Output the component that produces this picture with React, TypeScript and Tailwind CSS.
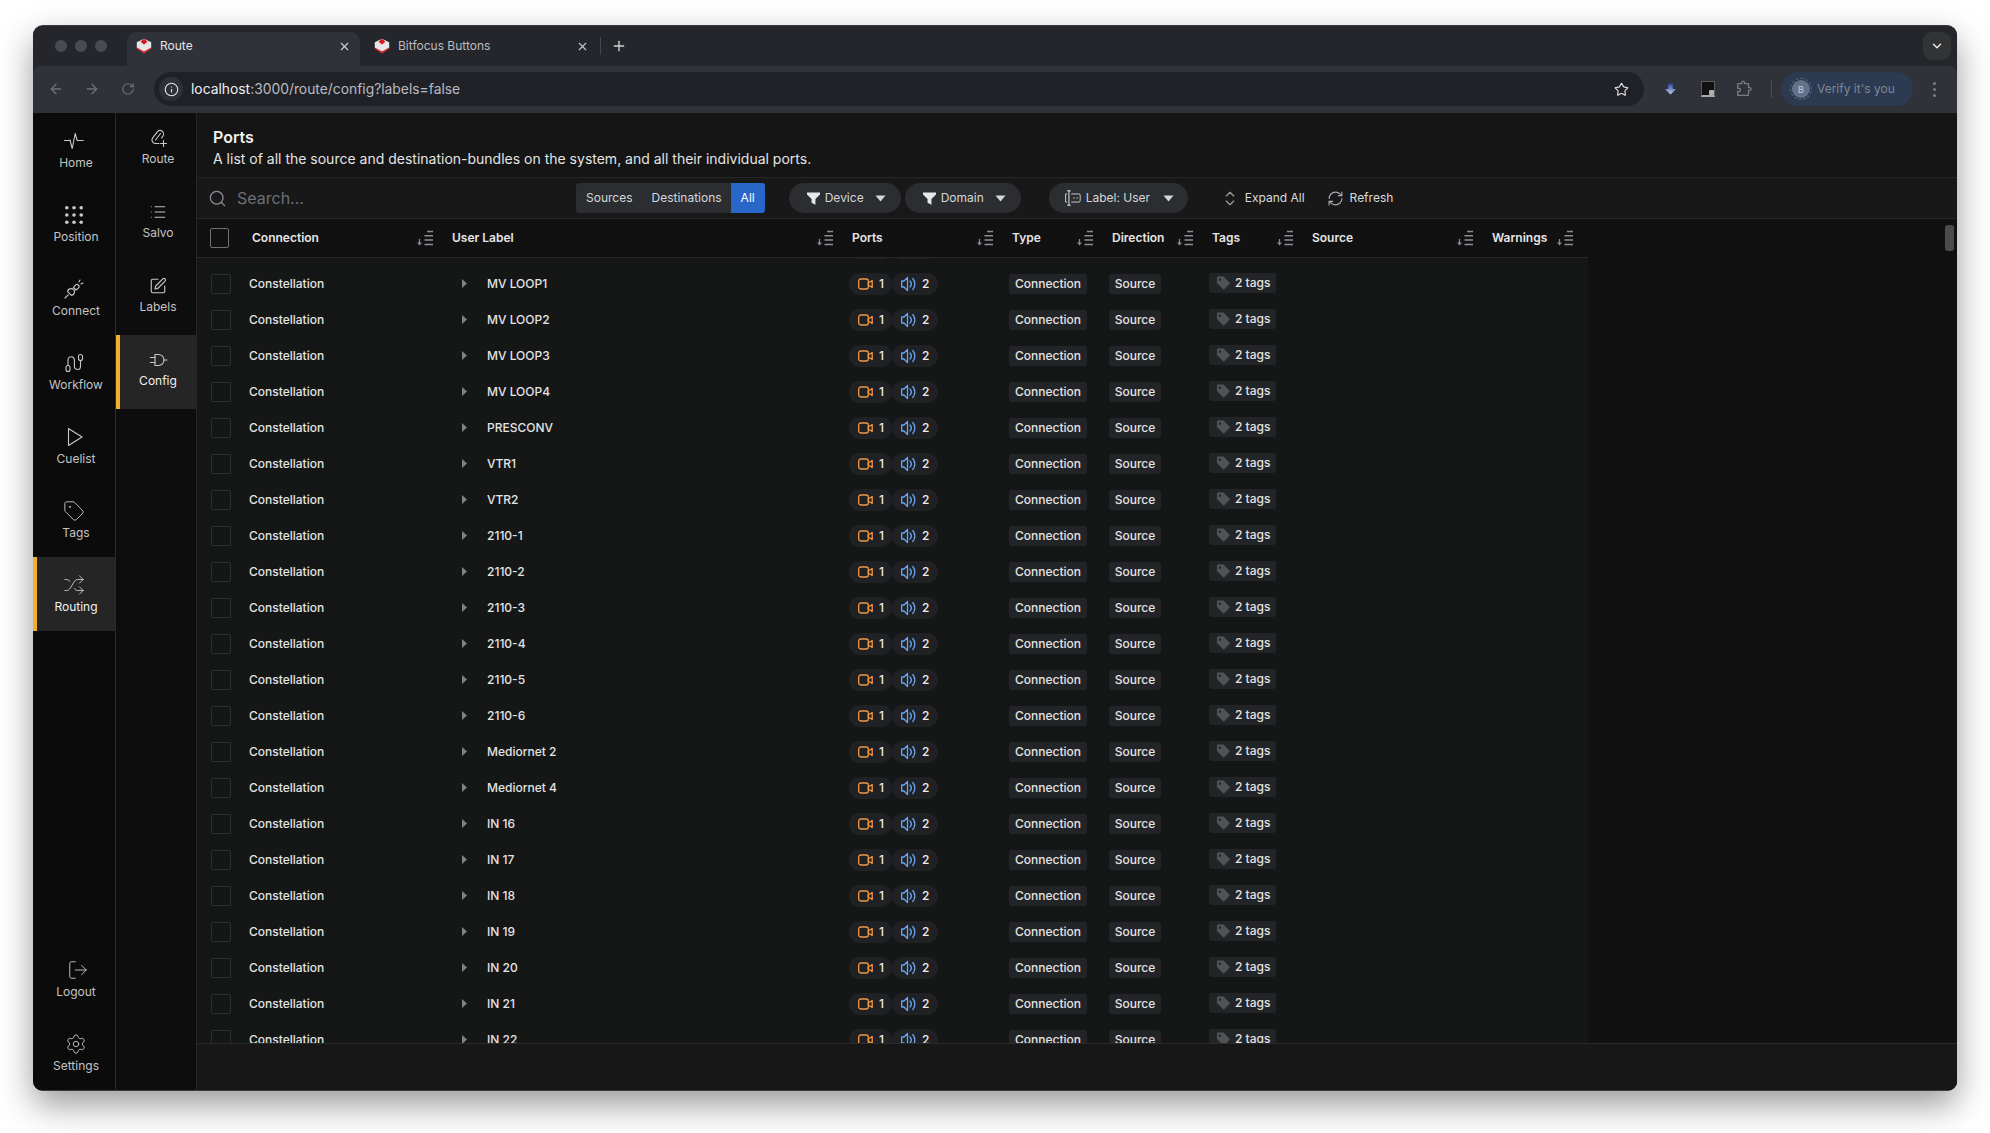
import React from "react";
import {
  ArrowLeft,
  ArrowRight,
  ChevronDown,
  Info,
  List,
  LogOut,
  Plus,
  RefreshCw,
  RotateCw,
  Search,
  Settings,
  Shuffle,
  SquarePen,
  Star,
  Tag,
  X,
} from "lucide-react";

type IconProps = { className?: string };

const Svg = ({ className, children }: IconProps & { children: React.ReactNode }) => (
  <svg
    viewBox="0 0 20 20"
    fill="none"
    stroke="currentColor"
    strokeWidth="1.1"
    strokeLinecap="round"
    strokeLinejoin="round"
    className={className}
  >
    {children}
  </svg>
);

const PulseIcon = ({ className }: IconProps) => (
  <Svg className={className}>
    <path d="M.5 9.500h4.500l1-.5 2.200 8.500 3-15 2 7h6" />
  </Svg>
);

const DotsIcon = ({ className }: IconProps) => (
  <svg viewBox="0 0 20 20" fill="currentColor" className={className}>
    {[2, 10, 18].map((y) =>
      [2, 10, 18].map((x) => <circle key={`${x}-${y}`} cx={x} cy={y} r="2" />)
    )}
  </svg>
);

const PlugIcon = ({ className }: IconProps) => (
  <Svg className={className}>
    <path d="M1 19l3.200-3.200" />
    <path d="M3.600 12.600l3.800 3.800c1.600-.3 3-1.700 3-3.400l.2-1.200-2.400-2.400-1.200.2c-1.700 0-3.100 1.400-3.400 3z" />
    <path d="M9.500 8.500l1.800-2.200c.6-.7 1.400-1.100 2.200-1l1.700 1.700c.1.800-.3 1.600-1 2.200l-2.200 1.800z" />
    <path d="M15 3l1-2M17 5l2-1" />
  </Svg>
);

const WorkflowIcon = ({ className }: IconProps) => (
  <Svg className={className}>
    <rect x="2" y="12.500" width="4" height="6" rx="2" />
    <rect x="14.500" y="1.500" width="4" height="6" rx="2" />
    <path d="M4 12.500V7a3.200 3.200 0 0 1 6.400 0v6.500a3 3 0 0 0 6.100 0V7.500" />
  </Svg>
);

const PlayIcon = ({ className }: IconProps) => (
  <Svg className={className}>
    <path d="M3.500 1.500L17 10 3.500 18.500z" />
  </Svg>
);

const RouteIcon = ({ className }: IconProps) => (
  <Svg className={className}>
    <path d="M11 15.500H7.500a3.500 3.500 0 0 1-2.800-5.600l4.600-6a3.500 3.500 0 0 1 5.600 4.200l-1.400 1.900" />
    <path d="M7.500 12l5-6.500" />
    <path d="M15.500 12.500v6M12.500 15.500h6" />
  </Svg>
);

const GateIcon = ({ className }: IconProps) => (
  <Svg className={className}>
    <path d="M7 4.500h3.500a5.500 5.500 0 0 1 0 11H7z" />
    <path d="M2.500 7.500H7M2.500 12.500H7M16 10h3" />
  </Svg>
);

const FunnelIcon = ({ className }: IconProps) => (
  <svg viewBox="0 0 12 12" fill="currentColor" className={className}>
    <path d="M0 .5h12v1.700L7.800 6.500V11.800L4.200 10V6.500L0 2.200z" />
  </svg>
);

const Caret = ({ className }: IconProps) => (
  <svg viewBox="0 0 11 7" fill="currentColor" className={className}>
    <path d="M.5 .5h10L5.500 6.500z" />
  </svg>
);

const LabelIcon = ({ className }: IconProps) => (
  <Svg className={className}>
    <path d="M3 5.500H1.800v9H3" />
    <path d="M4 2h3M4 18h3M5.500 2v16" stroke="#e5e7eb" />
    <path d="M8.500 5.500h8a1.500 1.500 0 0 1 1.500 1.500v6a1.500 1.500 0 0 1-1.500 1.500h-8" />
    <path d="M11 10h.01M14.500 10h.01" strokeWidth="1.700" />
  </Svg>
);

const ExpandIcon = ({ className }: IconProps) => (
  <svg
    viewBox="0 0 12 18"
    fill="none"
    stroke="currentColor"
    strokeWidth="1.400"
    strokeLinecap="round"
    strokeLinejoin="round"
    className={className}
  >
    <path d="M1.500 6L6 1.500 10.500 6M1.500 12L6 16.500 10.500 12" />
  </svg>
);

const SortIcon = () => (
  <svg viewBox="0 0 16 16" fill="none" className="w-4 h-4 text-[#8a8e98] shrink-0">
    <path d="M2.500 9v4" stroke="currentColor" strokeWidth="1.200" />
    <path d="M0 12.500h5L2.500 15.500z" fill="currentColor" />
    <path
      d="M10 1.500h6M7.500 5.800H16M7.500 10H16M7.500 14.500H16"
      stroke="currentColor"
      strokeWidth="1.500"
    />
  </svg>
);

const VideoIcon = ({ className }: IconProps) => (
  <svg
    viewBox="0 0 15 12"
    fill="none"
    stroke="currentColor"
    strokeWidth="1.300"
    strokeLinejoin="round"
    className={className}
  >
    <rect x=".7" y="1" width="9.600" height="10" rx="2" />
    <path d="M10.300 5l3.900-2.500v7L10.300 7z" />
  </svg>
);

const AudioIcon = ({ className }: IconProps) => (
  <svg
    viewBox="0 0 15 16"
    fill="none"
    stroke="currentColor"
    strokeWidth="1.300"
    strokeLinecap="round"
    strokeLinejoin="round"
    className={className}
  >
    <path d="M6.500 1.500v13L3 11H.7V5H3z" />
    <path d="M9 5a4.500 4.500 0 0 1 0 6M11.800 2.500a8.500 8.500 0 0 1 0 11" />
  </svg>
);

const SolidTag = ({ className }: IconProps) => (
  <svg viewBox="0 0 14 14" fill="currentColor" className={className}>
    <path d="M1 1.500C1 1 1.400 .6 2 .6h5c.4 0 .7.100 1 .4l5.400 5.500c.5.500.5 1.100 0 1.600l-4.900 4.900c-.5.500-1.100.5-1.600 0L1.400 7.500C1.100 7.200 1 6.900 1 6.500zM4 5a1.200 1.200 0 1 0 0-2.400A1.200 1.200 0 0 0 4 5z" />
  </svg>
);

const Favicon = () => (
  <svg viewBox="0 0 16 16" className="w-4 h-4 shrink-0">
    <path d="M8 .8l7.200 3.500v6.300L8 15.200.8 10.600V4.300z" fill="#e6e6e6" />
    <path d="M8 .8l3.400 2.900L8 6.400 4.600 3.700z" fill="#d8141c" />
    <path d="M.8 9.600L8 13.600l7.200-4v1.200L8 15.200.8 10.800z" fill="#d8141c" />
  </svg>
);

const PuzzleIcon = ({ className }: IconProps) => (
  <Svg className={className}>
    <path
      d="M3 4h4.500V2.800a1.500 1.500 0 0 1 3 0V4H15v4.500h1.400a1.500 1.500 0 0 1 0 3H15V17H3v-4.200h1.300a1.800 1.800 0 0 0 0-3.600H3z"
      strokeWidth="1.500"
    />
  </Svg>
);

const NavItem = ({
  icon,
  label,
  active,
  spacing,
}: {
  icon: React.ReactNode;
  label: string;
  active?: boolean;
  spacing: string;
}) => (
  <div
    className={`h-[74px] w-full flex flex-col items-center border-l-4 ${spacing} ${
      active ? "bg-[#252525] border-[#efb02f] text-[#f0f0f0]" : "border-transparent text-[#c4c4c4]"
    }`}
  >
    <div className="h-5 w-5 flex items-center justify-center text-[#c9c9c9]">{icon}</div>
    <span className="text-xs leading-4">{label}</span>
  </div>
);

const Toolbar = () => (
  <div className="h-[41px] bg-[#181818] border-b border-[#272727] flex items-center shrink-0">
    <Search className="w-[19px] h-[19px] ml-[11px] text-[#8b8f96]" strokeWidth={1.600} />
    <span className="ml-[10px] w-[339px] text-base text-[#6c6f75]">Search...</span>
    <div className="h-[30px] flex items-center bg-[#2b2d31] rounded-[3px] text-xs text-[#d5d7da]">
      <span className="px-[10px]">Sources</span>
      <span className="px-[9px]">Destinations</span>
      <span className="h-full flex items-center px-[10px] bg-[#2866c7] rounded-r-[3px] text-white">All</span>
    </div>
    <div className="ml-6 h-[30px] w-28 flex items-center rounded-full bg-[#2b2d31] pl-[18px] text-xs text-[#d5d7da]">
      <FunnelIcon className="w-[13px] h-[13px] text-[#e5e7eb]" />
      <span className="ml-[5px]">Device</span>
      <Caret className="w-[11px] h-[7px] ml-[11px] text-[#d5d7da]" />
    </div>
    <div className="ml-1 h-[30px] w-[116px] flex items-center rounded-full bg-[#2b2d31] pl-[18px] text-xs text-[#d5d7da]">
      <FunnelIcon className="w-[13px] h-[13px] text-[#e5e7eb]" />
      <span className="ml-[5px]">Domain</span>
      <Caret className="w-[11px] h-[7px] ml-[11px] text-[#d5d7da]" />
    </div>
    <div className="ml-7 h-[30px] w-[139px] flex items-center rounded-full bg-[#2b2d31] pl-[15px] text-xs text-[#d5d7da]">
      <LabelIcon className="w-[18px] h-[18px] text-[#c9ccd1]" />
      <span className="ml-[4px]">Label: User</span>
      <Caret className="w-[11px] h-[7px] ml-[13px] text-[#d5d7da]" />
    </div>
    <ExpandIcon className="w-[10px] h-[17px] ml-[37px] text-[#9a9ea5]" />
    <span className="ml-[10px] text-xs text-[#d9dbde]">Expand All</span>
    <RefreshCw className="w-[17px] h-[17px] ml-[22px] text-[#a5a9b0]" strokeWidth={1.600} />
    <span className="ml-[6px] text-xs text-[#d9dbde]">Refresh</span>
  </div>
);

const TableHead = () => (
  <div className="grid grid-cols-[43px_200px_400px_160px_100px_100px_100px_180px_108px] h-[39px] w-[1391px] items-center border-b border-[#26282a] text-xs font-semibold text-[#e6e6e6] shrink-0">
    <div className="pl-[13px]">
      <div className="w-[19px] h-5 rounded-[2px] border border-[#6d7178]" />
    </div>
    {[
      ["Connection", "pr-[7px]"],
      ["User Label", "pr-[7px]"],
      ["Ports", "pr-[7px]"],
      ["Type", "pr-[7px]"],
      ["Direction", "pr-[7px]"],
      ["Tags", "pr-[7px]"],
      ["Source", "pr-[7px]"],
      ["Warnings", "pr-[15px]"],
    ].map(([name, pad]) => (
      <div key={name} className={`flex items-center justify-between pl-3 ${pad}`}>
        <span>{name}</span>
        <SortIcon />
      </div>
    ))}
  </div>
);

const Row = ({ label }: { label: string }) => (
  <div className="grid grid-cols-[43px_200px_400px_160px_100px_100px_100px_180px_108px] h-9 items-center text-xs font-medium text-[#e4e4e4]">
    <div className="pl-[14px]">
      <div className="w-5 h-5 rounded-[2px] border border-[#2d2f33]" />
    </div>
    <div className="pl-[9px]">Constellation</div>
    <div className="flex items-center pl-[22px]">
      <svg viewBox="0 0 5 9" fill="currentColor" className="w-[5px] h-[9px] text-[#7d828b]">
        <path d="M0 0l5 4.500L0 9z" />
      </svg>
      <span className="ml-[20px]">{label}</span>
    </div>
    <div className="flex items-center pl-[9px]">
      <div className="h-[22px] w-[43px] flex items-center rounded-full bg-[#202124] pl-[9px] gap-[6px]">
        <VideoIcon className="w-[15px] h-3 text-[#f09a3e]" />
        <span className="text-[#ededed]">1</span>
      </div>
      <div className="h-[22px] w-[46px] flex items-center rounded-full bg-[#202124] pl-[9px] gap-[6px]">
        <AudioIcon className="w-[15px] h-4 text-[#6aa6f2]" />
        <span className="text-[#ededed]">2</span>
      </div>
    </div>
    <div className="pl-[9px]">
      <span className="inline-flex h-5 w-[78px] items-center justify-center rounded-[3px] bg-[#232428]">Connection</span>
    </div>
    <div className="pl-[9px]">
      <span className="inline-flex h-5 w-[52px] items-center justify-center rounded-[3px] bg-[#232428]">Source</span>
    </div>
    <div className="pl-[9px] -mt-[1px]">
      <span className="inline-flex h-5 w-[67px] items-center rounded-[3px] bg-[#232428] pl-[7px] gap-[5px]">
        <SolidTag className="w-[14px] h-[14px] text-[#505256]" />
        <span>2 tags</span>
      </span>
    </div>
    <div />
    <div />
  </div>
);

const labels = [
  "MV LOOP1",
  "MV LOOP2",
  "MV LOOP3",
  "MV LOOP4",
  "PRESCONV",
  "VTR1",
  "VTR2",
  "2110-1",
  "2110-2",
  "2110-3",
  "2110-4",
  "2110-5",
  "2110-6",
  "Mediornet 2",
  "Mediornet 4",
  "IN 16",
  "IN 17",
  "IN 18",
  "IN 19",
  "IN 20",
  "IN 21",
  "IN 22",
];

const BrowserChrome = () => (
  <>
    <div className="h-[41px] flex bg-[#25262b] shrink-0">
      <div className="w-[94px] flex items-center pl-[22px] gap-2 pb-[1px]">
        <span className="w-3 h-3 rounded-full bg-[#4a4b50]" />
        <span className="w-3 h-3 rounded-full bg-[#4a4b50]" />
        <span className="w-3 h-3 rounded-full bg-[#4a4b50]" />
      </div>
      <div className="w-[233px] mt-[6px] h-[35px] flex items-center rounded-t-[10px] bg-[#30323a] pl-[9px] pb-[7px] text-xs text-[#e3e4e6]">
        <Favicon />
        <span className="ml-2 flex-1">Route</span>
        <X className="w-[13px] h-[13px] mr-[9px] text-[#d0d2d6]" strokeWidth={2} />
      </div>
      <div className="w-[240px] mt-[6px] h-[35px] flex items-center pl-[14px] pb-[7px] text-xs text-[#b8bbc0]">
        <Favicon />
        <span className="ml-2 flex-1">Bitfocus Buttons</span>
        <X className="w-[13px] h-[13px] mr-[11px] text-[#c4c6ca]" strokeWidth={2} />
      </div>
      <div className="mt-[6px] h-[35px] flex items-center pb-[7px]">
        <span className="w-px h-[18px] bg-[#45474d]" />
        <Plus className="w-4 h-4 ml-[10px] text-[#d0d2d6]" strokeWidth={2} />
      </div>
      <div className="flex-1" />
      <div className="w-7 h-7 mt-[6px] mr-[6px] rounded-[9px] bg-[#323335] flex items-center justify-center">
        <ChevronDown className="w-[14px] h-[14px] text-[#e5e5e5]" strokeWidth={2.500} />
      </div>
    </div>
    <div className="h-[47px] flex items-center bg-[#30323a] shrink-0 -mt-px rounded-t-[8px] pb-[1px]">
      <ArrowLeft className="w-4 h-4 ml-[15px] text-[#6d7078]" strokeWidth={2} />
      <ArrowRight className="w-4 h-4 ml-5 text-[#6d7078]" strokeWidth={2} />
      <RotateCw className="w-[14px] h-[14px] ml-[21px] text-[#6d7078]" strokeWidth={2} />
      <div className="ml-[19px] w-[1490px] h-[34px] flex items-center rounded-full bg-[#202127]">
        <div className="ml-[5px] w-6 h-6 rounded-full bg-[#2f3138] flex items-center justify-center">
          <Info className="w-[15px] h-[15px] text-[#e2e3e6]" strokeWidth={1.800} />
        </div>
        <span className="ml-[8px] text-[13.850px] text-[#b9bbc1]">
          <span className="text-[#eceef0]">localhost</span>:3000/route/config?labels=false
        </span>
        <div className="flex-1" />
        <Star className="w-[15px] h-[15px] mr-[15px] text-[#e2e3e6]" strokeWidth={1.800} />
      </div>
      <svg viewBox="0 0 12 12" className="w-[11px] h-3 ml-[21px]">
        <defs>
          <linearGradient id="dl" x1="0" y1="0" x2="0" y2="1">
            <stop offset="0" stopColor="#2c45a0" />
            <stop offset="1" stopColor="#c0cbe4" />
          </linearGradient>
        </defs>
        <path d="M3.500 0h5v6H12L6 12 0 6h3.500z" fill="url(#dl)" />
      </svg>
      <div className="ml-[25px] w-[14px] h-[16px] bg-[#111] border-t border-l border-r border-[#5a5a5a] border-b-2 border-b-[#a8a8a8] flex items-end justify-end">
        <span className="w-[5px] h-[5px] bg-[#b0b0b0] rounded-[1px]" />
      </div>
      <PuzzleIcon className="w-[18px] h-[18px] ml-[20px] text-[#777a81]" />
      <span className="ml-[18px] w-px h-[18px] bg-[#4b4d54]" />
      <div className="ml-[9px] w-[132px] h-[34px] flex items-center rounded-full bg-[#2c3b51] pl-[11px] text-xs text-[#7c8797]">
        <div className="w-[18px] h-[18px] rounded-full bg-[#647389] flex items-center justify-center text-[9px] leading-none text-[#c5ccd6] outline-1 outline-dashed outline-offset-[1px] outline-[#57667c]">
          B
        </div>
        <span className="ml-[7px] whitespace-nowrap">Verify it's you</span>
      </div>
      <div className="ml-[20px] flex flex-col gap-[3px]">
        <span className="w-[3px] h-[3px] rounded-full bg-[#777a81]" />
        <span className="w-[3px] h-[3px] rounded-full bg-[#777a81]" />
        <span className="w-[3px] h-[3px] rounded-full bg-[#777a81]" />
      </div>
    </div>
  </>
);

const mainSpacing = "pt-[18px] gap-[4px]";
const subSpacing = "pt-[15px] gap-[3px]";

export default function App() {
  return (
    <div className="w-[1990px] h-[1133px] bg-white pt-[25px] pl-[33px] overflow-hidden font-['Inter',sans-serif]">
      <div className="w-[1924px] h-[1066px] rounded-[10px] overflow-hidden flex flex-col bg-[#25262b] border-t border-[#3a3a3c] shadow-[0_14px_34px_rgba(0,0,0,0.4)]">
        <BrowserChrome />

        <div className="flex-1 min-h-0 flex border-b border-[#3d3d3d]">
          <div className="w-[83px] bg-[#0b0b0b] border-r border-[#2b2b2b] flex flex-col justify-between shrink-0">
            <div>
              <NavItem spacing={mainSpacing} label="Home" icon={<PulseIcon className="w-5 h-5 shrink-0 -translate-x-[2px]" />} />
              <NavItem spacing={mainSpacing} label="Position" icon={<DotsIcon className="w-[18px] h-[18px] shrink-0 -translate-x-[2px]" />} />
              <NavItem spacing={mainSpacing} label="Connect" icon={<PlugIcon className="w-5 h-5 shrink-0 -translate-x-[2px]" />} />
              <NavItem spacing={mainSpacing} label="Workflow" icon={<WorkflowIcon className="w-5 h-5 shrink-0 -translate-x-[2px]" />} />
              <NavItem spacing={mainSpacing} label="Cuelist" icon={<PlayIcon className="w-5 h-5 shrink-0 -translate-x-[1px]" />} />
              <NavItem spacing={mainSpacing} label="Tags" icon={<Tag className="w-[22px] h-[22px] shrink-0 -translate-x-[2px]" strokeWidth={1} />} />
              <NavItem active spacing={mainSpacing} label="Routing" icon={<Shuffle className="w-[22px] h-[22px] shrink-0 -translate-x-[2px]" strokeWidth={1} />} />
            </div>
            <div>
              <NavItem spacing={mainSpacing} label="Logout" icon={<LogOut className="w-[22px] h-[22px] shrink-0 translate-x-[2px]" strokeWidth={1} />} />
              <NavItem spacing={mainSpacing} label="Settings" icon={<Settings className="w-[22px] h-[22px] shrink-0" strokeWidth={1} />} />
            </div>
          </div>

          <div className="w-[81px] bg-[#0d0d0d] border-r border-[#262626] shrink-0">
            <NavItem spacing={subSpacing} label="Route" icon={<RouteIcon className="w-5 h-5" />} />
            <NavItem spacing={subSpacing} label="Salvo" icon={<List className="w-[18px] h-[18px]" strokeWidth={1.300} />} />
            <NavItem spacing={subSpacing} label="Labels" icon={<SquarePen className="w-[18px] h-[18px]" strokeWidth={1.500} />} />
            <NavItem active spacing={subSpacing} label="Config" icon={<GateIcon className="w-5 h-5" />} />
          </div>

          <div className="flex-1 min-w-0 flex flex-col bg-[#171717]">
            <div className="h-[65px] bg-[#151515] border-b border-[#262626] pl-4 pt-[14px] shrink-0">
              <h1 className="text-base leading-5 font-semibold text-[#f2f2f2]">Ports</h1>
              <p className="text-sm leading-5 mt-[2px] text-[#e4e4e4]">
                A list of all the source and destination-bundles on the system, and all their individual ports.
              </p>
            </div>
            <Toolbar />
            <div className="relative flex-1 min-h-0 flex flex-col bg-[#111111]">
              <TableHead />
              <div className="flex-1 min-h-0 overflow-hidden w-[1391px] bg-[#151717]">
                <div className="flex ml-[660px] gap-[16px] h-[7.500px]">
                  <span className="w-[27px] h-px bg-[#202124]" />
                  <span className="w-[30px] h-px bg-[#202124]" />
                </div>
                {labels.map((label) => (
                  <Row key={label} label={label} />
                ))}
              </div>
              <div className="absolute right-[3px] top-[6px] w-[9px] h-[26px] rounded-[3px] bg-[#4b4b4b]" />
            </div>
            <div className="h-[47px] bg-[#171717] border-t border-[#2a2a2a] shrink-0" />
          </div>
        </div>
      </div>
    </div>
  );
}
